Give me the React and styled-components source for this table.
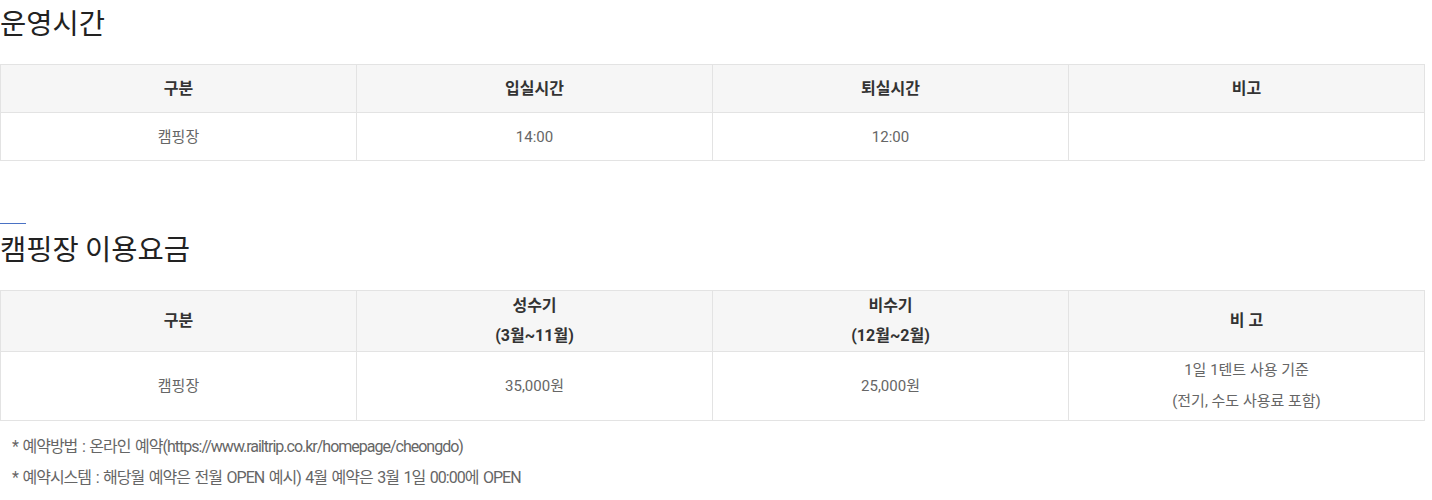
import React from 'react';
import styled, { createGlobalStyle } from 'styled-components';

const GlobalStyle = createGlobalStyle`
  body {
    margin: 0;
    background: #fff;
    font-family: Roboto, "Noto Sans CJK KR", sans-serif;
  }
`;

const Page = styled.div`
  width: 1425px;
`;

const Section = styled.section`
  margin-top: ${p => p.$first ? '0' : '62px'};
`;

const Bar = styled.div`
  width: 26px;
  height: 1px;
  background: #4a72c4;
  margin-bottom: 2px;
`;

const Title = styled.h2`
  margin: 0 0 20px;
  font-family: "Noto Sans CJK KR", sans-serif;
  font-size: 28.5px;
  font-weight: 400;
  line-height: 44px;
  color: #222;
`;

const Table = styled.table`
  width: 100%;
  table-layout: fixed;
  border-collapse: collapse;
  border: 1px solid #e3e3e3;
`;

const Th = styled.th`
  padding: ${p => p.$pad || '9px 10px 8px'};
  border: 1px solid #e3e3e3;
  background: #f6f6f6;
  font-size: 16px;
  font-weight: 700;
  line-height: 30px;
  color: #333;
  text-align: center;
`;

const Td = styled.td`
  padding: ${p => p.$pad || '9px 10px 8px'};
  border: 1px solid #e3e3e3;
  font-size: 15px;
  line-height: ${p => p.$lh || '30px'};
  color: #666;
  text-align: center;
`;

const Notes = styled.ul`
  list-style: none;
  margin: 10px 0 0;
  padding: 0 0 0 12px;
`;

const Note = styled.li`
  font-size: 16px;
  line-height: 31px;
  letter-spacing: -1px;
  word-spacing: 1.6px;
  color: #666;
`;

export default function App() {
  return (
    <Page>
      <GlobalStyle />
      <Section $first>
        <Title>운영시간</Title>
        <Table>
          <thead>
            <tr>
              <Th>구분</Th>
              <Th>입실시간</Th>
              <Th>퇴실시간</Th>
              <Th>비고</Th>
            </tr>
          </thead>
          <tbody>
            <tr>
              <Td>캠핑장</Td>
              <Td>14:00</Td>
              <Td>12:00</Td>
              <Td></Td>
            </tr>
          </tbody>
        </Table>
      </Section>

      <Section>
        <Bar />
        <Title>캠핑장 이용요금</Title>
        <Table>
          <thead>
            <tr>
              <Th $pad="0 10px">구분</Th>
              <Th $pad="0 10px">성수기<br />(3월~11월)</Th>
              <Th $pad="0 10px">비수기<br />(12월~2월)</Th>
              <Th $pad="0 10px">비 고</Th>
            </tr>
          </thead>
          <tbody>
            <tr>
              <Td $pad="3px 10px" $lh="31px">캠핑장</Td>
              <Td $pad="3px 10px" $lh="31px">35,000원</Td>
              <Td $pad="3px 10px" $lh="31px">25,000원</Td>
              <Td $pad="3px 10px" $lh="31px">1일 1텐트 사용 기준<br />(전기, 수도 사용료 포함)</Td>
            </tr>
          </tbody>
        </Table>
        <Notes>
          <Note>* 예약방법 : 온라인 예약(https://www.railtrip.co.kr/homepage/cheongdo)</Note>
          <Note>* 예약시스템 : 해당월 예약은 전월 OPEN 예시) 4월 예약은 3월 1일 00:00에 OPEN</Note>
        </Notes>
      </Section>
    </Page>
  );
}
